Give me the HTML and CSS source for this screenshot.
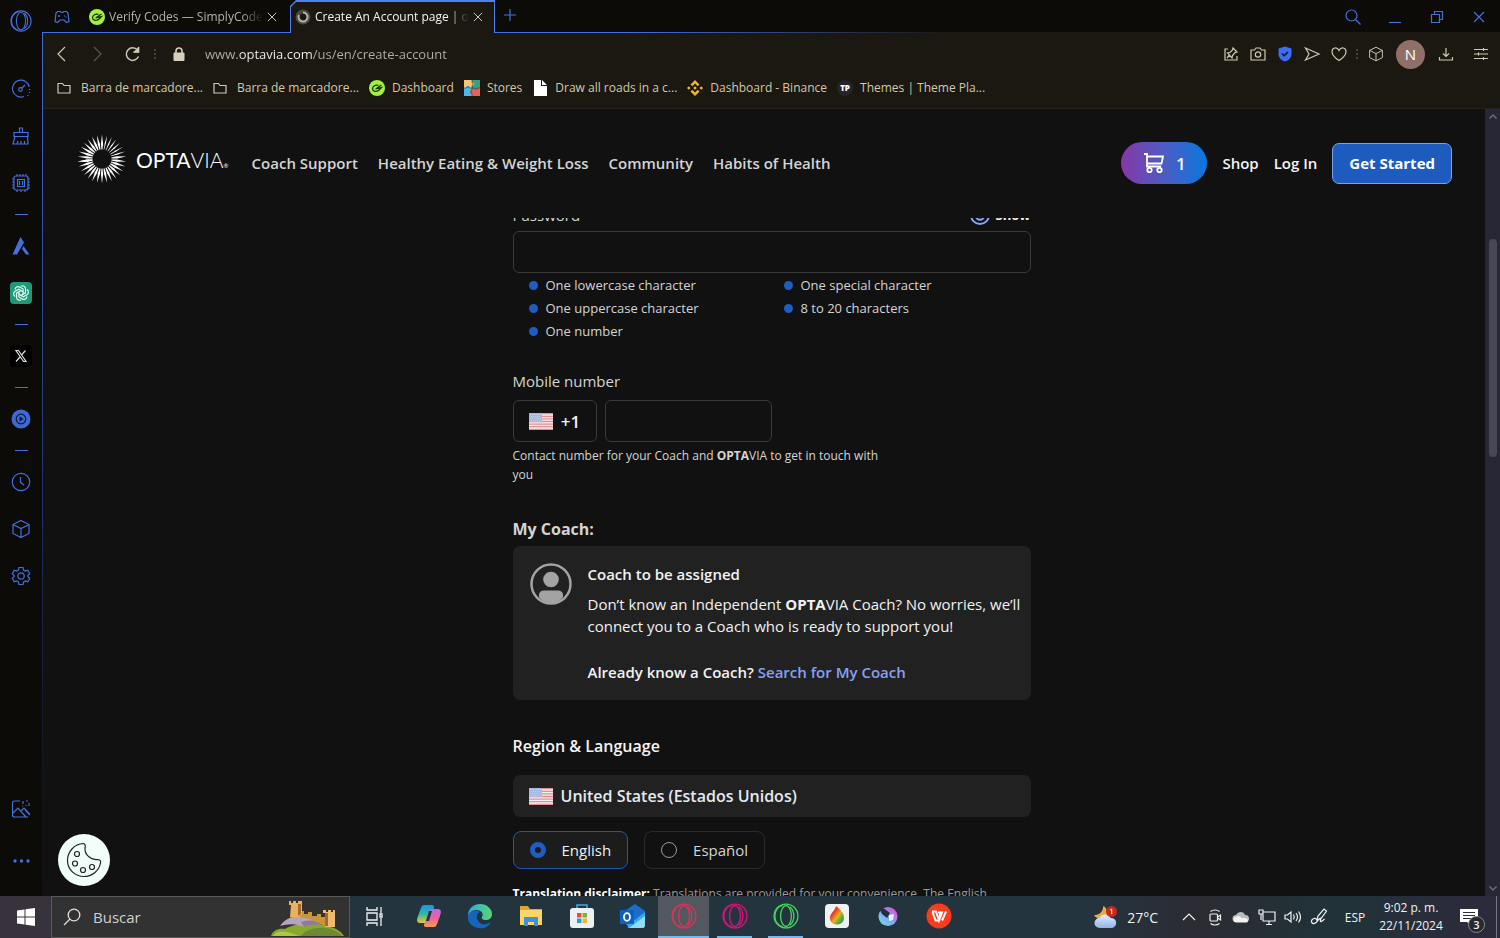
FILE: index.html
```html
<!DOCTYPE html>
<html lang="en">
<head>
    <meta charset="UTF-8">
    <meta name="viewport" content="width=device-width, initial-scale=1.0">
    <title>Create An Account page | OPTAVIA</title>
    <link rel="stylesheet" href="styles.css">
</head>
<body>
    <!-- Shared shapes -->
    <svg class="defs" aria-hidden="true">
        <defs>
            <symbol id="opera" viewBox="0 0 24 24"><circle cx="12" cy="12" r="11"/><ellipse cx="12" cy="12" rx="5" ry="9.5"/><path d="M9 2a10.5 10.5 0 0 0 0 20M15.500 3.500c5 4 5 13 0 17"/></symbol>
            <symbol id="codes" viewBox="0 0 18 18"><circle cx="9" cy="9" r="9" fill="#a4f23c"/><path d="M10.500 6C7.500 5 4 7 4 9.800s3.500 3.700 6.500 2.200l3.500-3.500-6.500 1.500 6.500-4.500" fill="none" stroke="#173010" stroke-width="1.400"/></symbol>
            <symbol id="folder" viewBox="0 0 14 12"><path d="M1 1.500h4.500l1.500 2h6v7.500H1z"/></symbol>
            <symbol id="cube" viewBox="0 0 20 20"><path d="M10 1.500l8 4v9l-8 4-8-4v-9zM2 5.500l8 4 8-4M10 9.500v9"/></symbol>
            <symbol id="close" viewBox="0 0 12 12"><path d="M1 1l10 10M11 1L1 11"/></symbol>
            <symbol id="flag" viewBox="0 0 24 17">
                <path fill="#eef0f3" d="M0 0h24v17H0z"/>
                <path stroke="#e58d92" stroke-width="1.300" d="M0 .700h24M0 3.300h24M0 5.900h24M0 8.500h24M0 11.100h24M0 13.700h24M0 16.300h24"/>
                <path fill="#a9b8de" d="M0 0h13v9H0z"/>
                <path stroke="#c3cee9" stroke-dasharray="1 1" d="M1 1.500h11M2 3.500h10M1 5.500h11M2 7.500h10"/>
            </symbol>
            <path id="ray" d="M25 .600L24.400 8.500 24.800 15.500h.400L25.600 8.500z"/>
            <path id="ray-wide" d="M25 .600L23.900 10 24.500 15.500h1L26.100 10z"/>
            <linearGradient id="copilot-a" x1="0" y1="0" x2="0" y2="1"><stop offset="0" stop-color="#2a8cf0"/><stop offset=".5" stop-color="#2bbd9a"/><stop offset="1" stop-color="#f2c23a"/></linearGradient>
            <linearGradient id="copilot-b" x1="0" y1="0" x2="0" y2="1"><stop offset="0" stop-color="#b06cf0"/><stop offset=".5" stop-color="#f0609a"/><stop offset="1" stop-color="#f79a4a"/></linearGradient>
            <linearGradient id="edge" x1="0" y1="0" x2="1" y2="0"><stop offset="0" stop-color="#2aa9e8"/><stop offset="1" stop-color="#5cd66a"/></linearGradient>
            <linearGradient id="drop" x1="0" y1="0" x2="1" y2="1"><stop offset="0" stop-color="#38c8b0"/><stop offset=".3" stop-color="#e8352c"/><stop offset=".55" stop-color="#e8b020"/><stop offset=".75" stop-color="#4fb22c"/><stop offset="1" stop-color="#1a8ae0"/></linearGradient>
            <linearGradient id="krita" x1="0" y1="1" x2="1" y2="0"><stop offset="0" stop-color="#5ff0d8"/><stop offset=".5" stop-color="#8aa0f8"/><stop offset="1" stop-color="#f03cc8"/></linearGradient>
            <linearGradient id="cloud" x1="0" y1="0" x2="0" y2="1"><stop offset="0" stop-color="#e4eefc"/><stop offset="1" stop-color="#8db4ee"/></linearGradient>
        </defs>
    </svg>

    <div class="browser">
        <aside class="sidebar">
            <button class="opera-menu" aria-label="Opera menu"><svg class="icon-22"><use href="#opera"/></svg></button>
            <ul class="side-list">
                <li><button aria-label="GX Control"><svg class="icon-20" viewBox="0 0 20 20"><path d="M13 17.500A8.500 8.500 0 1 1 18.300 8M18.500 10v1M18.500 13v1M17 16v1"/><circle cx="9.500" cy="10.500" r="1.800"/><path d="M11 9l3-3"/></svg></button></li>
                <li><button aria-label="GX Cleaner"><svg class="icon-20" viewBox="0 0 20 20"><path d="M8.500 6.500V2h3v4.500M3 6.500h14v4H3zM4 10.500L2 18h15l-.500-7.500M6 18l1-3M10 18v-3M13.500 18v-3"/></svg></button></li>
                <li><button aria-label="Mods"><svg class="icon-20" viewBox="0 0 20 20"><rect x="3" y="3" width="14" height="14" rx="2"/><rect x="6.500" y="6.500" width="7" height="7"/><path d="M8.500 8v4M11.500 8v4M6 1v2M9 1v2M12 1v2M15 1v2M6 17v2M10 17v2M14 17v2M1 6h2M1 9h2M1 12h2M1 15h2M17 6h2M17 9h2M17 12h2M17 15h2"/></svg></button></li>
                <li class="line"></li>
                <li><button aria-label="Aria"><svg class="icon-20 solid" viewBox="0 0 20 20"><path d="M9.500 1l3.500 5.500L6 18.500H1.500zM12.500 10l6 8.500h-3.500L11 13z"/></svg></button></li>
                <li><button aria-label="ChatGPT"><svg class="icon-22" viewBox="0 0 22 22"><rect width="22" height="22" rx="4" fill="#1f9a78" stroke="none"/><g fill="none" stroke="#e8fff6" stroke-width="1.200"><g id="petal"><path d="M11 4.200a3 3 0 0 1 4.500 2.600v4l-4.500 2.600"/></g><use href="#petal" transform="rotate(60 11 11)"/><use href="#petal" transform="rotate(120 11 11)"/><use href="#petal" transform="rotate(180 11 11)"/><use href="#petal" transform="rotate(240 11 11)"/><use href="#petal" transform="rotate(300 11 11)"/></g></svg></button></li>
                <li class="line"></li>
                <li><button aria-label="X"><svg class="icon-22" viewBox="0 0 22 22"><rect width="22" height="22" rx="4" fill="#000" stroke="none"/><path d="M6 5.500h2.500l7.500 11h-2.500zM15.500 5.500l-4 4.500M10 12l-4 4.500" stroke="#dcdcdc"/></svg></button></li>
                <li class="line"></li>
                <li><button aria-label="Player"><svg class="icon-20" viewBox="0 0 20 20"><circle cx="10" cy="10" r="9.500" fill="#3f68d2" stroke="none"/><circle cx="10" cy="10" r="4.800" stroke="#101a3a"/><path d="M8.500 7.500l4 2.500-4 2.500z" fill="#101a3a" stroke="none"/></svg></button></li>
                <li class="line"></li>
                <li><button aria-label="History"><svg class="icon-20" viewBox="0 0 20 20"><circle cx="10" cy="10" r="8.700"/><path d="M9.500 5v5.500l3.500 2.500"/></svg></button></li>
                <li><button aria-label="Extensions"><svg class="icon-20"><use href="#cube"/></svg></button></li>
                <li><button aria-label="Settings"><svg class="icon-20" viewBox="0 0 20 20"><path d="M8 1.500h4l.600 2.600 1.600.900 2.500-.800 2 3.500-1.900 1.800v1l1.900 1.800-2 3.500-2.500-.800-1.600.900-.600 2.600H8l-.600-2.600-1.600-.900-2.500.800-2-3.500 1.900-1.800v-1L1.300 7.700l2-3.500 2.500.800 1.600-.900z"/><circle cx="10" cy="10" r="3.200"/></svg></button></li>
            </ul>
            <ul class="side-list side-bottom">
                <li><button aria-label="Wallpaper"><svg class="icon-20" viewBox="0 0 20 20"><path d="M9 2H3.500A2 2 0 0 0 1.500 4v12a2 2 0 0 0 2 2H17M2 14l5-5 8 9M10 12l3-3 6 6.500M12 2v3M15 2h2M18 4v3M11 7h1M15 6v1M14 11l5 5"/></svg></button></li>
                <li><button aria-label="More"><svg class="icon-20 solid" viewBox="0 0 20 20"><circle cx="4" cy="10" r="1.700"/><circle cx="10.500" cy="10" r="1.700"/><circle cx="17" cy="10" r="1.700"/></svg></button></li>
            </ul>
        </aside>

        <div class="window">
            <div class="tab-bar">
                <button class="gx" aria-label="GX Corner"><svg class="icon-16" viewBox="0 0 16 14"><path d="M3.500 1.500h3l.500 1h2l.500-1h3L14 3l1 8.500-2.500 1L10 10H6l-2.500 2.500-2.500-1L2 3z"/><path d="M4 6h2M5 5v2M10.500 5.500v1M12 6.500v1"/></svg></button>
                <div class="tab">
                    <svg class="icon-16 raw"><use href="#codes"/></svg>
                    <span class="tab-title">Verify Codes — SimplyCodes</span>
                    <button aria-label="Close tab"><svg class="icon-10"><use href="#close"/></svg></button>
                </div>
                <div class="tab active">
                    <svg class="icon-16 raw" viewBox="0 0 16 16"><circle cx="8" cy="8" r="5.500" fill="none" stroke="#4a4843" stroke-width="4"/><path d="M8 3.500a4.500 4.500 0 1 1-4 2.500" fill="none" stroke="#b4b0a8" stroke-width="2"/></svg>
                    <span class="tab-title">Create An Account page | optavia</span>
                    <button aria-label="Close tab"><svg class="icon-10"><use href="#close"/></svg></button>
                </div>
                <button class="new-tab" aria-label="New tab"><svg class="icon-12" viewBox="0 0 12 12"><path d="M6 0v12M0 6h12"/></svg></button>
                <div class="window-buttons">
                    <button aria-label="Search tabs"><svg class="icon-16" viewBox="0 0 16 16"><circle cx="6.500" cy="6.500" r="5.500"/><path d="M10.500 10.500l5 5"/></svg></button>
                    <button aria-label="Minimize"><svg class="icon-12" viewBox="0 0 12 12"><path d="M0 11.500h12"/></svg></button>
                    <button aria-label="Restore"><svg class="icon-12" viewBox="0 0 12 12"><path d="M.500 3.500h8v8h-8zM3.500 3V.500h8v8H9"/></svg></button>
                    <button aria-label="Close"><svg class="icon-12"><use href="#close"/></svg></button>
                </div>
            </div>

            <div class="address-bar">
                <button aria-label="Back"><svg class="icon-16" viewBox="0 0 16 16"><path d="M10 1L3 8l7 7"/></svg></button>
                <button class="off" aria-label="Forward"><svg class="icon-16" viewBox="0 0 16 16"><path d="M4 1l7 7-7 7"/></svg></button>
                <button aria-label="Reload"><svg class="icon-16" viewBox="0 0 16 16"><path d="M13.500 10.500a6.300 6.300 0 1 1-1-6.500M13.500 1v5h-5" stroke-width="1.500"/><path d="M13.500 2v4h-4z" fill="#cfc8b4"/></svg></button>
                <span class="dots"></span>
                <svg class="lock" viewBox="0 0 12 14"><path d="M3 6V4a3 3 0 0 1 6 0v2" fill="none" stroke="#d8cfbb" stroke-width="1.600"/><rect x=".500" y="5.500" width="11" height="8.500" rx="1" fill="#d8cfbb"/></svg>
                <input class="url" type="text" aria-label="Address" value="www.optavia.com/us/en/create-account">
                <div class="tools">
                    <button aria-label="Pinboard"><svg class="icon-14" viewBox="0 0 14 14"><path d="M4 2H1v11h12V9M9 1l4 4-2 .500L8.500 8.500 8 11 3.500 6 6 5.500 8.500 3zM5.500 8L3 11"/></svg></button>
                    <button aria-label="Snapshot"><svg class="icon-16" viewBox="0 0 16 16"><path d="M1 4h3.500L6 2h4l1.500 2H15v10H1z"/><circle cx="8" cy="8.500" r="2.700"/></svg></button>
                    <button aria-label="Shield"><svg class="icon-16 raw" viewBox="0 0 16 16"><path d="M8 .500l6.500 2V8c0 4-3 6.500-6.500 7.500C4.500 14.500 1.500 12 1.500 8V2.500z" fill="#3d6df0"/><path d="M5 7.500l2.200 2.200L11 6" fill="none" stroke="#101426" stroke-width="1.600"/></svg></button>
                    <button aria-label="My Flow"><svg class="icon-16" viewBox="0 0 16 16"><path d="M1.500 2L15 8 1.500 14 5 8z"/></svg></button>
                    <button aria-label="Add to favorites"><svg class="icon-16" viewBox="0 0 16 16"><path d="M8 14.500C4 12 1 9 1 5.500 1 1.500 6 .500 8 4.500c2-4 7-3 7 1 0 3.500-3 6.500-7 9z"/></svg></button>
                    <span class="dots"></span>
                    <button aria-label="Extensions"><svg class="icon-16"><use href="#cube"/></svg></button>
                    <button class="profile">N</button>
                    <button class="spaced" aria-label="Downloads"><svg class="icon-14" viewBox="0 0 14 14"><path d="M7 1v8M4 6.500L7 9.500l3-3M.500 10v3h13v-3"/></svg></button>
                    <button class="spaced" aria-label="Easy setup"><svg class="icon-14" viewBox="0 0 14 14"><path d="M0 2.500h14M0 7h14M0 11.500h14M9.500 1v3M4.500 5.500v3M9.500 10v3"/></svg></button>
                </div>
            </div>

            <nav class="bookmarks" aria-label="Bookmarks">
                <a href="#" class="dir"><svg class="icon-14"><use href="#folder"/></svg>Barra de marcadore...</a>
                <a href="#" class="dir"><svg class="icon-14"><use href="#folder"/></svg>Barra de marcadore...</a>
                <a href="#"><svg class="icon-16 raw"><use href="#codes"/></svg>Dashboard</a>
                <a href="#"><svg class="icon-16 raw" viewBox="0 0 16 16"><path fill="#f2c877" d="M0 0h8v8H0z"/><path fill="#3d9d84" d="M8 0h8v8H8z"/><path fill="#4cb8ea" d="M0 8h8v8H0z"/><path fill="#e8615c" d="M8 8h8v8H8z"/><circle cx="8.500" cy="4" r="1.800" fill="#f2c877"/><circle cx="12" cy="8.500" r="1.800" fill="#3d9d84"/><circle cx="7.500" cy="12" r="1.800" fill="#e8615c"/><circle cx="4" cy="7.500" r="1.800" fill="#4cb8ea"/><path d="M8 0v2.300a1.800 1.800 0 0 1 0 3.400V8M8 8v2.300a1.800 1.800 0 0 0 0 3.400V16M0 8h2.300a1.800 1.800 0 0 1 3.400 0H8M8 8h2.300a1.800 1.800 0 0 0 3.400 0H16" fill="none" stroke="#2a3430" stroke-width=".600"/></svg>Stores</a>
                <a href="#"><svg class="icon-16 raw" viewBox="0 0 16 16"><path fill="#fff" d="M2 0h7v6h6v10H2zM10 0l5 5h-5z"/></svg>Draw all roads in a c...</a>
                <a href="#"><svg class="icon-16 raw" viewBox="0 0 16 16"><path fill="#f0b62c" d="M8 0l4.500 4.500-1.800 1.800L8 3.600 5.300 6.300 3.500 4.500zM8 16l-4.500-4.500 1.800-1.800L8 12.400l2.700-2.700 1.800 1.800zM1.800 6.200L3.600 8 1.800 9.800 0 8zM14.200 6.200L16 8l-1.800 1.800L12.400 8zM8 6.200L9.800 8 8 9.800 6.200 8z"/></svg>Dashboard - Binance</a>
                <a href="#"><span class="tp">TP</span>Themes | Theme Pla...</a>
            </nav>

            <div class="page">
                <header class="site-header">
                    <a href="#" class="logo" aria-label="OPTAVIA home">
                        <svg class="sun" viewBox="0 0 50 50">
                            <g id="q1"><use href="#ray-wide"/><use href="#ray" transform="rotate(12 25 25)"/><use href="#ray" transform="rotate(24 25 25)"/><use href="#ray" transform="rotate(36 25 25)"/><use href="#ray" transform="rotate(48 25 25)"/><use href="#ray" transform="rotate(60 25 25)"/><use href="#ray" transform="rotate(72 25 25)"/></g>
                            <g id="q2"><use href="#ray-wide" transform="rotate(84 25 25)"/><use href="#ray-wide" transform="rotate(96 25 25)"/><use href="#ray-wide" transform="rotate(108 25 25)"/><use href="#ray-wide" transform="rotate(120 25 25)"/><use href="#ray-wide" transform="rotate(132 25 25)"/><use href="#ray-wide" transform="rotate(144 25 25)"/><use href="#ray-wide" transform="rotate(156 25 25)"/><use href="#ray-wide" transform="rotate(168 25 25)"/></g>
                            <use href="#q2" transform="rotate(96 25 25)"/>
                            <use href="#q2" transform="rotate(180 25 25)"/>
                        </svg>
                        <span class="brand">OPTA<span>VIA</span><sub>®</sub></span>
                    </a>
                    <nav class="site-nav">
                        <a href="#">Coach Support</a>
                        <a href="#">Healthy Eating &amp; Weight Loss</a>
                        <a href="#">Community</a>
                        <a href="#">Habits of Health</a>
                    </nav>
                    <div class="site-actions">
                        <button class="cart" aria-label="Cart, 1 item"><svg viewBox="0 0 22 22"><path d="M1 2h3v12.500h14M4 4.500h16L18.500 11.500H4"/><circle cx="6.500" cy="18" r="2.200"/><circle cx="16.500" cy="18" r="2.200"/></svg>1</button>
                        <a href="#">Shop</a>
                        <a href="#">Log In</a>
                        <button class="get-started">Get Started</button>
                    </div>
                </header>

                <main class="content">
                    <form class="account">
                        <div class="label-row">
                            <label for="password">Password</label>
                            <button type="button" class="show"><svg viewBox="0 0 20 20"><path d="M1 10a9.500 9.500 0 0 1 18 0M1 10a9 9 0 0 0 18 0"/><circle cx="10" cy="11" r="3.800"/></svg>Show</button>
                        </div>
                        <input class="box" type="password" id="password">
                        <ul class="rules">
                            <li>One lowercase character</li>
                            <li>One special character</li>
                            <li>One uppercase character</li>
                            <li>8 to 20 characters</li>
                            <li>One number</li>
                        </ul>

                        <label class="phone-label" for="mobile">Mobile number</label>
                        <div class="phone">
                            <button type="button" class="box code"><svg class="flag"><use href="#flag"/></svg>+1</button>
                            <input class="box" type="tel" id="mobile">
                        </div>
                        <p class="help">Contact number for your Coach and <b>OPTA</b>VIA to get in touch with you</p>

                        <h2 class="coach-title">My Coach:</h2>
                        <section class="coach">
                            <svg class="avatar" viewBox="0 0 42 42"><circle cx="21" cy="21" r="19.500" fill="none" stroke="#a3a3a3" stroke-width="2.500"/><circle cx="21" cy="16.500" r="7.800" fill="#a3a3a3"/><path d="M9 34v-2c0-3 2-4.500 5-4.500h14c3 0 5 1.500 5 4.500v2c-3 4-7.500 6.500-12 6.500S12 38 9 34z" fill="#a3a3a3"/></svg>
                            <div>
                                <h3>Coach to be assigned</h3>
                                <p>Don’t know an Independent <b>OPTA</b>VIA Coach? No worries, we’ll connect you to a Coach who is ready to support you!</p>
                                <p class="know">Already know a Coach? <a href="#">Search for My Coach</a></p>
                            </div>
                        </section>

                        <h2 class="region-title">Region &amp; Language</h2>
                        <div class="country"><svg class="flag"><use href="#flag"/></svg>United States (Estados Unidos)</div>
                        <div class="languages">
                            <label class="language selected"><input type="radio" name="language" checked>English</label>
                            <label class="language"><input type="radio" name="language">Español</label>
                        </div>
                        <p class="disclaimer"><b>Translation disclaimer:</b> Translations are provided for your convenience. The English</p>
                    </form>
                </main>

                <button class="cookie" aria-label="Cookie settings"><svg viewBox="0 0 36 36"><path d="M17.500 1.500C19.500 2 19.500 4 19 6c-.500 6 5 12 12 11.500 3 0 4 1 3.500 3.500C33 29 26 34.500 18 34.500c-9 0-16.500-7-16.500-16C1.500 10 8 2 17.500 1.500z"/><circle cx="11" cy="12" r="2.500"/><circle cx="9" cy="21.500" r="2.500"/><circle cx="17" cy="28" r="2.500"/><circle cx="26" cy="25" r="2.500"/></svg></button>
                <div class="scrollbar">
                    <svg viewBox="0 0 8 5"><path d="M.500 4.500L4 1l3.500 3.500"/></svg>
                    <span class="thumb"></span>
                    <svg viewBox="0 0 8 5"><path d="M.500.500L4 4l3.500-3.500"/></svg>
                </div>
            </div>
        </div>
    </div>

    <footer class="taskbar">
        <button class="start" aria-label="Start"><svg viewBox="0 0 18 18"><path d="M0 2.500L7.500 1.400v7.100H0zM8.500 1.300L18 0v8.500H8.500zM0 9.500h7.500v7.100L0 15.500zM8.500 9.500H18V18l-9.500-1.300z"/></svg></button>
        <div class="search">
            <svg class="glass" viewBox="0 0 18 18"><circle cx="11" cy="7" r="5.800"/><path d="M7 11L1 17"/></svg>
            <input type="text" placeholder="Buscar" aria-label="Buscar">
            <svg class="castle" viewBox="0 0 78 38"><path fill="#8aa82c" d="M0 38c2-6 8-8 14-7 8-6 30-8 42-3 9 2 14 5 17 10z"/><path fill="#6c8a34" d="M30 38c4-6 14-9 24-8 8 1 14 4 17 8z"/><path fill="#a8cc3c" d="M2 38c3-6 12-5 18-3l8 3z"/><path fill="#b7a3bc" d="M9 28c5-7 13-11 22-11 13 1 24 5 33 12-12-4-24-4-31 0-8-4-16-3-24-1z"/><path fill="#8f7a9c" d="M30 24c10-3 20-1 30 4-10-2-20-2-27 1z"/><path fill="#c9963c" d="M29 13h4v3h4v-2h4v4h5v-2h4v3h4v9c-8-4-16-8-25-9z"/><path fill="#e6b45c" d="M18 3h2v2h2V3h3v2h2V3h4v13l-3 3h-9l1-12h-2z"/><path fill="#a8672c" d="M27 6h3v10l-3 2z"/><path fill="#eebb6c" d="M52 12h3v2h2v-2h3v2h2v-2h2v17H54V15h-2z"/><path fill="#a8672c" d="M54 15h3v13h-3z"/></svg>
        </div>
        <div class="apps">
            <button aria-label="Task view"><svg class="white" viewBox="4 0 26 26"><path d="M6 4v3h10V4M6 10h10v7H6zM6 23v-3h10v3M20 4v6M20 15v8M19 11h2v3h-2z"/></svg></button>
            <button aria-label="Copilot"><svg viewBox="0 0 26 26"><path fill="url(#copilot-a)" d="M8 2h8c3 0 2 3 1 5l-3 8c-1 3-2 5-5 5H4c-4 0-3-4-2-7l3-8c1-2 1-3 3-3z"/><path fill="url(#copilot-b)" d="M18 24h-8c-3 0-2-3-1-5l3-8c1-3 2-5 5-5h5c4 0 3 4 2 7l-3 8c-1 2-1 3-3 3z"/><path fill="#24323c" d="M13 8h3l-3 10h-3z"/></svg></button>
            <button aria-label="Edge"><svg viewBox="0 0 26 26"><path fill="#1565b8" d="M1 13C3 7 9 7 13 9c-4 1-5 9 2 12 4 1 7-1 9-2-3 6-9 7-13 6C4 23 0 19 1 13z"/><path fill="url(#edge)" d="M1 13C1 5 7 1 13 1c7 0 12 5 12 10 0 4-3 6-6 6s-5-1-4-3c2-4-1-7-6-7-4 0-7 3-8 6z"/></svg></button>
            <button aria-label="File Explorer"><svg viewBox="0 0 26 26"><path fill="#e0a52c" d="M2 3h8l2 3h12v16H2z"/><path fill="#fbd568" d="M2 7h22v15H2z"/><path fill="#3f92d8" d="M6 14h14v9h-4v-4h-6v4H6z"/></svg></button>
            <button aria-label="Microsoft Store"><svg viewBox="0 0 26 26"><path fill="none" stroke="#44a8e8" stroke-width="1.500" d="M8 6V2h10v4"/><rect x="1" y="5" width="24" height="20" rx="3" fill="#eef1f4"/><path fill="#e8502c" d="M8 10h4.500v4.500H8z"/><path fill="#76b82c" d="M13.500 10H18v4.500h-4.500z"/><path fill="#2a98e0" d="M8 15.500h4.500V20H8z"/><path fill="#f2b42c" d="M13.500 15.500H18V20h-4.500z"/></svg></button>
            <button aria-label="Outlook"><svg viewBox="0 0 26 26"><path fill="#1c6cc8" d="M6 7l9-6 10 7v14H6z"/><path fill="#2fb0ee" d="M6 13l9 4 10-8v13a3 3 0 0 1-3 3H8z"/><path fill="#8fdcf8" d="M9 25l16-12v9a3 3 0 0 1-3 3z"/><rect y="7" width="14" height="14" rx="1" fill="#1060c0"/><ellipse cx="7" cy="14" rx="3" ry="3.800" fill="none" stroke="#fff" stroke-width="1.800"/></svg></button>
            <button class="running current gx-red" aria-label="Opera GX"><svg><use href="#opera"/></svg></button>
            <button class="running gx-pink" aria-label="Opera GX 2"><svg><use href="#opera"/></svg></button>
            <button class="running gx-green" aria-label="Opera GX 3"><svg><use href="#opera"/></svg></button>
            <button aria-label="Drawing"><svg viewBox="0 0 26 26"><rect x="1" y="1" width="24" height="24" rx="4" fill="#f1f1f1"/><path fill="url(#drop)" d="M12 3c5 4 8 7 8 12 0 4-3 6.500-7 6.500S6 19 6 15c0-5 5-7 6-12z"/></svg></button>
            <button aria-label="Krita"><svg viewBox="0 0 26 26"><circle cx="13" cy="13.500" r="9.500" fill="url(#krita)"/><path fill="#2a2c38" d="M4 5l3-1 8 6-3 5-5-4z"/><path fill="#dff6fa" d="M14 12l5-1-1 6-4 1z"/></svg></button>
            <button aria-label="WPS Office"><svg viewBox="0 0 26 26"><circle cx="13" cy="13" r="12.500" fill="#fa3c1c"/><path fill="none" stroke="#fff" stroke-width="2" d="M6 8.500h4l3 9 3-8h-4M6.500 9l3 8.500h2.500l3-9M16 17.500L20 8.500"/></svg></button>
        </div>
        <div class="tray">
            <button class="weather"><svg viewBox="0 0 28 26"><path fill="#f2a93c" d="M11 1c0 6-4 10-10 10 3 5 11 5 14 0 1-4 0-8-4-10z"/><path fill="url(#cloud)" d="M7 25a5.500 5.500 0 0 1 0-11c2-5 10-5 12 0a5.500 5.500 0 0 1 1 11z"/><circle cx="20" cy="7" r="6" fill="#c42b1c"/><path d="M18.500 5.500L20.200 4.300V10" stroke="#fff" fill="none"/></svg>27°C</button>
            <button class="tray-icon" aria-label="Hidden icons"><svg viewBox="0 0 18 18"><path d="M3 12l6-6 6 6"/></svg></button>
            <button class="tray-icon" aria-label="Meet now"><svg viewBox="0 0 18 18"><rect x="4" y="6" width="7.500" height="7" rx="1"/><path d="M11.500 9l3-2v5l-3-2M4.500 3.500c2.500-2 6.500-2 9 0M4.500 15.500c2.500 2 6.500 2 9 0"/></svg></button>
            <button class="tray-icon" aria-label="OneDrive"><svg viewBox="0 0 18 18"><path d="M4 14a3.500 3.500 0 0 1 0-7c2-4 8-4 9 0a3.500 3.500 0 0 1 1 7z" fill="#b9bcc0" stroke="none"/><path d="M4 14.500a3 3 0 0 1 1-6c2-1 4 0 5 2 3-1 6 0 6 2s-1 2-3 2z" fill="#f2f2f2" stroke="none"/></svg></button>
            <button class="tray-icon" aria-label="Network"><svg viewBox="0 0 18 18"><path d="M5 4h12v9H5zM11 13v3M8 16.500h6M1 2h4v4H1zM3 6v6"/></svg></button>
            <button class="tray-icon" aria-label="Volume"><svg viewBox="0 0 18 18"><path d="M1 7h2.500L7 4v10l-3.500-3H1zM9.500 6.500q1.500 2.500 0 5M12 5q3 4 0 8M14.500 3.500q4 5.500 0 11"/></svg></button>
            <button class="tray-icon" aria-label="Pen"><svg viewBox="0 0 18 18"><path d="M7 12l1-4 6-7 2.500 2L11 10.500 7 12zM7 12c-2-3-6-1-5.500 2 1 3 5 1 6-1 2-3 4-4 3-1s2 1 4-1"/></svg></button>
            <button class="lang">ESP</button>
            <button class="clock"><span>9:02 p. m.</span><span>22/11/2024</span></button>
            <button class="notify" aria-label="3 notifications"><svg viewBox="0 0 18 18"><path d="M0 1h18v13h-7v4l-4-4H0z" fill="#fff"/><path d="M3 4.500h12M3 7.500h12M3 10.500h12" stroke="#2a2c3a"/></svg><span>3</span></button>
        </div>
    </footer>
</body>
</html>
```

FILE: styles.css
```css
* {
    box-sizing: border-box;
}
body {
    margin: 0;
    height: 100vh;
    display: flex;
    flex-direction: column;
    overflow: hidden;
    background: #111;
    color: #d4d4d4;
    font-family: "Open Sans", "Noto Sans", sans-serif;
    font-size: 15px;
}
button {
    display: flex;
    align-items: center;
    justify-content: center;
    padding: 0;
    border: none;
    background: none;
    color: inherit;
    font: inherit;
    cursor: pointer;
}
a {
    color: inherit;
    text-decoration: none;
}
ul, p, h2, h3 {
    margin: 0;
    padding: 0;
    list-style: none;
}
svg {
    flex: none;
    overflow: visible;
}
.defs {
    position: absolute;
    width: 0;
    height: 0;
}
.icon-10 { width: 10px; height: 10px; }
.icon-12 { width: 12px; height: 12px; }
.icon-14 { width: 14px; height: 14px; }
.icon-16 { width: 16px; height: 16px; }
.icon-20 { width: 20px; height: 20px; }
.icon-22 { width: 22px; height: 22px; }

/* Browser */
.browser {
    flex: 1;
    min-height: 0;
    display: flex;
    background: #0c0b08;
}
.sidebar {
    width: 42px;
    display: flex;
    flex-direction: column;
    padding-bottom: 9px;
}
.sidebar svg,
.tab-bar svg {
    fill: none;
    stroke: #4470dd;
    stroke-width: 1.2;
}
.sidebar .solid {
    fill: #4470dd;
    stroke: none;
}
.opera-menu {
    height: 42px;
    margin-bottom: 23px;
}
.side-list li {
    height: 47px;
    display: flex;
    align-items: center;
    justify-content: center;
}
.side-list .line {
    height: 16px;
}
.line::before {
    content: "";
    width: 13px;
    height: 1px;
    background: #4470dd;
}
.side-bottom {
    margin-top: auto;
}
.side-bottom li {
    height: 52px;
}
.window {
    flex: 1;
    min-width: 0;
    display: flex;
    flex-direction: column;
    background: linear-gradient(#4470dd, #263a78 50%, #15182a 80%, #111);
    padding-left: 1px;
}

/* Tabs */
.tab-bar {
    height: 33px;
    margin-left: -1px;
    padding-left: 1px;
    display: flex;
    background: linear-gradient(90deg, #4470dd 40%, #1b1811 62%) bottom / 100% 1px no-repeat #0c0b08;
}
.tab-bar .raw {
    stroke: none;
}
.gx {
    width: 38px;
}
.tab {
    width: 209px;
    display: flex;
    align-items: center;
    gap: 4px;
    padding: 0 13px 0 8px;
    color: #b5b2aa;
    font-size: 12px;
}
.tab-title {
    flex: 1;
    min-width: 0;
    overflow: hidden;
    white-space: nowrap;
    mask-image: linear-gradient(90deg, #000 86%, transparent);
}
.tab button svg {
    stroke: #c9c9c6;
}
.tab.active {
    position: relative;
    width: 205px;
    padding: 0 12px 0 5px;
    background: #4f7ff0;
    clip-path: polygon(0 6px, 6px 0, 100% 0, 100% 100%, 0 100%);
    color: #f4f2ee;
}
.tab.active::before {
    content: "";
    position: absolute;
    inset: 2px 1px 0 1px;
    background: #1b1811;
    clip-path: polygon(0 5px, 5px 0, 100% 0, 100% 100%, 0 100%);
}
.tab.active > * {
    position: relative;
}
.new-tab {
    width: 30px;
    height: 30px;
}
.window-buttons {
    margin-left: auto;
    display: flex;
}
.window-buttons button {
    width: 42px;
}

/* Address bar */
.address-bar {
    height: 42px;
    display: flex;
    align-items: center;
    padding: 0 2px;
    background: #1b1811;
}
.address-bar svg,
.bookmarks svg {
    fill: none;
    stroke: #cfc8b4;
    stroke-width: 1.2;
}
.address-bar .raw,
.address-bar .lock,
.bookmarks .raw {
    stroke: none;
}
.address-bar > button {
    width: 35px;
    height: 30px;
}
.address-bar .off {
    opacity: 0.35;
}
.dots {
    width: 10px;
    height: 12px;
    background: radial-gradient(circle, #47433a 1px, transparent 1px) center / 4px 4px repeat-y;
}
.address-bar .lock {
    width: 12px;
    height: 14px;
    margin: 0 14px 0 13px;
}
.url {
    flex: 1;
    min-width: 0;
    padding: 0 6px;
    border: none;
    outline: none;
    font: 13px "Open Sans", "Noto Sans", sans-serif;
    background: linear-gradient(90deg, #b5b0a2 39px, #f6f4ef 39px, #f6f4ef 113px, #b5b0a2 113px);
    background-clip: text;
    -webkit-text-fill-color: transparent;
}
.tools {
    display: flex;
    align-items: center;
}
.tools button {
    width: 27px;
    height: 27px;
}
.tools .profile {
    width: 29px;
    height: 29px;
    margin: 0 3px 0 7px;
    border-radius: 50%;
    background: #8f6f68;
    color: #fff;
}
.tools .spaced {
    width: 35px;
}

/* Bookmarks */
.bookmarks {
    height: 34px;
    display: flex;
    align-items: center;
    gap: 10px;
    padding: 0 14px 8px;
    background: #1b1811;
    border-bottom: 1px solid #25221c;
    color: #d3c9ac;
    font-size: 12px;
    white-space: nowrap;
}
.bookmarks a {
    display: flex;
    align-items: center;
    gap: 7px;
}
.bookmarks .dir {
    gap: 10px;
}
.tp {
    width: 16px;
    height: 16px;
    border-radius: 50%;
    background: #25242a;
    color: #fff;
    font-size: 8px;
    font-weight: 800;
    line-height: 16px;
    text-align: center;
}

/* Web page */
.page {
    position: relative;
    flex: 1;
    min-height: 0;
    display: flex;
    flex-direction: column;
    background: #111;
}
.site-header {
    flex: none;
    height: 109px;
    display: flex;
    align-items: center;
    padding: 0 48px 1px 34px;
    background: #111;
    font-weight: 600;
    white-space: nowrap;
}
.logo {
    display: flex;
    align-items: center;
    gap: 9px;
    margin: 0 23px 8px 0;
}
.sun {
    width: 50px;
    height: 50px;
    fill: #fff;
}
.brand {
    color: #fff;
    font-family: Lato, "Open Sans", sans-serif;
    font-size: 21px;
    font-weight: 400;
}
.brand span {
    font-weight: 300;
}
.brand sub {
    font-size: 6px;
    vertical-align: baseline;
}
.site-nav {
    display: flex;
    gap: 20px;
}
.site-actions {
    margin-left: auto;
    display: flex;
    align-items: center;
    gap: 15px;
    color: #f4f4f4;
}
.cart {
    width: 86px;
    height: 42px;
    gap: 11px;
    border-radius: 21px;
    background: linear-gradient(90deg, #8638a6, #4c5cc4 50%, #0a78de);
    font-size: 17px;
}
.cart svg {
    width: 22px;
    height: 22px;
    fill: none;
    stroke: #fff;
    stroke-width: 1.8;
}
.get-started {
    height: 41px;
    padding: 0 16px;
    border: 1px solid #7f9ee8;
    border-radius: 7px;
    background: #1d5bbf;
    color: #fff;
    font-weight: 700;
}
.content {
    flex: 1;
    min-height: 0;
    overflow: hidden;
    padding: 0 24px;
}
.account {
    max-width: 518px;
    margin: -13px auto 0;
}
.label-row {
    display: flex;
    justify-content: space-between;
    align-items: center;
    height: 20px;
    margin-bottom: 6px;
}
.show {
    gap: 6px;
    color: #f4f4f4;
    font-size: 13px;
    font-weight: 700;
}
.show svg {
    width: 20px;
    height: 20px;
    fill: none;
    stroke: #8aa6f4;
    stroke-width: 2;
}
.box {
    display: flex;
    width: 100%;
    height: 42px;
    border: 1px solid #3a3a3a;
    border-radius: 6px;
    background: #111;
    color: #f0f0f0;
    font: 15px "Open Sans", "Noto Sans", sans-serif;
}
.rules {
    display: grid;
    grid-template-columns: 1fr 1fr;
    padding: 1px 0 0 16px;
    column-gap: 8px;
    font-size: 13px;
    line-height: 23px;
}
.rules li {
    display: flex;
    align-items: center;
    gap: 8px;
}
.rules li::before {
    content: "";
    width: 9px;
    height: 9px;
    border-radius: 50%;
    background: #1f5cc4;
}
.phone-label {
    display: block;
    margin: 28px 0 9px;
    line-height: 20px;
}
.phone {
    display: flex;
    gap: 8px;
}
.phone input {
    width: 167px;
}
.phone .code {
    width: 84px;
    gap: 8px;
    font-size: 17px;
    font-weight: 600;
}
.flag {
    width: 24px;
    height: 17px;
}
.help {
    max-width: 380px;
    margin-top: 4px;
    font-size: 12px;
    line-height: 19px;
}
.coach-title,
.region-title {
    font-size: 16px;
    font-weight: 600;
    line-height: 24px;
}
.coach-title {
    margin: 33px 0 5px;
    font-weight: 700;
}
.coach {
    display: flex;
    gap: 16px;
    padding: 17px 6px 17px 17px;
    border-radius: 7px;
    background: #212121;
    color: #f2f2f2;
    line-height: 22px;
}
.avatar {
    width: 42px;
    height: 42px;
}
.coach h3 {
    margin-bottom: 8px;
    font-size: 15px;
    font-weight: 600;
}
.know {
    margin-top: 24px;
    font-weight: 600;
}
.know a {
    color: #86a1f2;
}
.region-title {
    margin: 34px 0 17px;
    color: #f4f4f4;
}
.country {
    display: flex;
    align-items: center;
    gap: 8px;
    height: 42px;
    padding: 0 16px;
    border-radius: 7px;
    background: #212121;
    color: #e4eaf2;
    font-size: 16px;
    font-weight: 600;
}
.languages {
    display: flex;
    gap: 16px;
    margin: 14px 0 15px;
}
.language {
    display: flex;
    align-items: center;
    gap: 16px;
    height: 38px;
    padding: 0 16px;
    border: 1px solid #2a2a2a;
    border-radius: 8px;
}
.language.selected {
    border-color: #1f56b4;
    background: #1c1c1c;
    color: #e8f2fa;
    font-weight: 500;
}
.language input {
    appearance: none;
    width: 16px;
    height: 16px;
    margin: 0;
    border: 1px solid #9a9a9a;
    border-radius: 50%;
}
.language input:checked {
    border: 5px solid #1f5cc4;
}
.disclaimer {
    color: #9a9a9a;
    font-size: 12px;
    line-height: 20px;
}
.disclaimer b {
    color: #fff;
}
.cookie {
    position: absolute;
    left: 15px;
    bottom: 10px;
    width: 52px;
    height: 52px;
    border-radius: 50%;
    background: #f1fdf8;
}
.cookie svg {
    width: 36px;
    height: 36px;
    fill: none;
    stroke: #222;
    stroke-width: 1.2;
}
.scrollbar {
    position: absolute;
    top: 0;
    right: 0;
    bottom: 0;
    width: 15px;
    display: flex;
    flex-direction: column;
    align-items: center;
    padding: 5px 0;
    background: #282735;
}
.scrollbar svg {
    width: 8px;
    height: 5px;
    fill: none;
    stroke: #6c6b78;
    stroke-width: 1.5;
}
.thumb {
    width: 8px;
    height: 28%;
    margin: 120px 0 auto;
    border-radius: 4px;
    background: #484756;
}

/* Taskbar */
.taskbar {
    height: 42px;
    display: flex;
    background: linear-gradient(90deg, #38323c 50px, #24343f 350px, #24343f 72%, #2c2b33 80%, #203338 89%, #2b2b3b 97%);
    color: #f0f0f0;
}
.start {
    width: 51px;
}
.start svg {
    width: 18px;
    height: 18px;
    fill: #fff;
}
.search {
    width: 299px;
    display: flex;
    align-items: center;
    padding-left: 11px;
    border: 1px solid #5a5a5a;
    background: #323232;
}
.search input {
    flex: 1;
    min-width: 0;
    padding: 0 12px;
    border: none;
    outline: none;
    background: none;
    color: #d8d8d8;
    font: 15px "Open Sans", "Noto Sans", sans-serif;
}
.search input::placeholder {
    color: #d0d0d0;
}
.glass {
    width: 18px;
    height: 18px;
    fill: none;
    stroke: #e0e0e0;
    stroke-width: 1.3;
}
.castle {
    width: 78px;
    height: 38px;
}
.apps {
    display: flex;
    padding-left: 2px;
}
.apps button {
    width: 51px;
    border-bottom: 2px solid transparent;
}
.apps svg {
    width: 26px;
    height: 26px;
}
.apps .white {
    fill: none;
    stroke: #f0f0f0;
    stroke-width: 1.3;
}
.apps .running {
    border-image: linear-gradient(90deg, transparent 8px, #76b9ed 8px, #76b9ed 43px, transparent 43px) 0 0 2 0;
    fill: none;
    stroke-width: 1.2;
}
.apps .current {
    border-image: none;
    border-color: #76b9ed;
    background: #51585f;
}
.gx-red { stroke: #d8345c; }
.gx-pink { stroke: #e0107c; }
.gx-green { stroke: #40d85c; }
.tray {
    margin-left: auto;
    display: flex;
    align-items: stretch;
    padding-right: 2px;
    border-right: 1px solid #77777f;
    margin-right: 3px;
}
.weather {
    gap: 8px;
    margin-right: 18px;
    font-size: 14px;
}
.weather svg {
    width: 26px;
    height: 24px;
}
.tray-icon {
    width: 26px;
}
.tray-icon svg {
    width: 18px;
    height: 18px;
    fill: none;
    stroke: #f0f0f0;
    stroke-width: 1.2;
}
.lang {
    width: 46px;
    font-size: 12px;
}
.clock {
    flex-direction: column;
    width: 66px;
    font-size: 12px;
    line-height: 18px;
}
.notify {
    position: relative;
    width: 50px;
}
.notify svg {
    width: 18px;
    height: 18px;
}
.notify span {
    position: absolute;
    left: 24px;
    top: 20px;
    width: 17px;
    height: 17px;
    border: 1px solid #8a8a8a;
    border-radius: 50%;
    background: #262830;
    font-size: 11px;
    font-weight: 600;
    line-height: 15px;
}
```
